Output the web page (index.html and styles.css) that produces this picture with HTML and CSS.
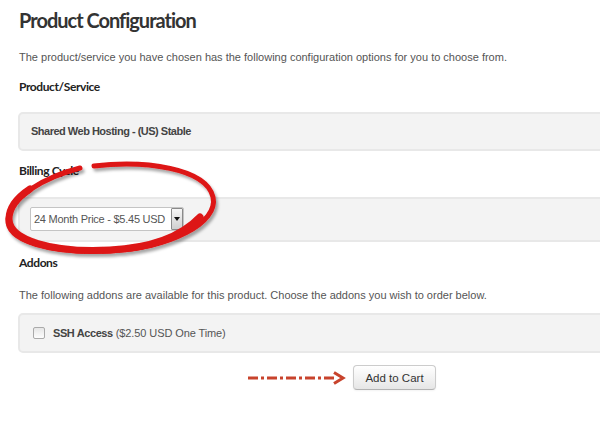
FILE: index.html
```html
<!DOCTYPE html>
<html>
<head>
<meta charset="utf-8">
<link rel="stylesheet" href="styles.css">
</head>
<body>
<div class="page">
  <h1 class="title">Product Configuration</h1>
  <p class="intro">The product/service you have chosen has the following configuration options for you to choose from.</p>

  <h3 class="label">Product/Service</h3>
  <div class="well well-product"><strong>Shared Web Hosting - (US) Stable</strong></div>

  <h3 class="label label-billing">Billing Cycle</h3>
  <div class="well well-select">
    <div class="select">
      <span class="select-text">24 Month Price - $5.45 USD</span>
      <span class="select-btn"><span class="caret"></span></span>
    </div>
  </div>

  <h3 class="label label-addons">Addons</h3>
  <p class="addons-intro">The following addons are available for this product. Choose the addons you wish to order below.</p>
  <div class="well well-addon">
    <span class="checkbox"></span>
    <span class="addon-text"><strong>SSH Access</strong> ($2.50 USD One Time)</span>
  </div>

  <div class="actions">
    <svg class="arrow" width="100" height="14" viewBox="0 0 100 14">
      <line x1="2" y1="7" x2="90" y2="7" stroke="#c8432c" stroke-width="3" stroke-dasharray="10 3 3 3"/>
      <path d="M88 1.5 L97 7 L88 12.5" fill="none" stroke="#c8432c" stroke-width="3" stroke-linejoin="miter"/>
    </svg>
    <button class="btn">Add to Cart</button>
  </div>

  <svg class="circle" width="240" height="115" viewBox="0 0 240 115">
    <defs>
      <filter id="sh" x="-10%" y="-10%" width="130%" height="140%">
        <feDropShadow dx="2" dy="3" stdDeviation="1.6" flood-color="#000" flood-opacity="0.35"/>
      </filter>
    </defs>
    <g filter="url(#sh)" fill="none" stroke="#dd1414" stroke-linecap="round">
      <path d="M94 11 C145 5, 206 13, 213 42 C219 68, 170 93, 110 96 C50 99, 6 86, 8 64 C10 42, 45 22, 80 13" stroke-width="5"/>
      <path d="M200 62 C180 83, 150 93, 110 95 C52 98, 9 85, 9 64 C9 52, 18 42, 30 34" stroke-width="7"/>
    </g>
  </svg>
</div>
</body>
</html>
```

FILE: styles.css
```css
html, body {
  margin: 0;
  padding: 0;
  background: #fff;
  overflow: hidden;
}
.page {
  position: relative;
  width: 760px;
  padding: 8px 0 40px 18px;
  font-family: "Liberation Sans", Arial, sans-serif;
  font-size: 11px;
  color: #555;
}
.title {
  margin: 0;
  padding-left: 1px;
  font-family: Lato, "Open Sans", sans-serif;
  font-weight: 700;
  font-size: 20px;
  line-height: 24px;
  letter-spacing: -1px;
  color: #333;
}
.intro {
  margin: 17px 0 0 1px;
  line-height: 16px;
}
.label {
  margin: 14px 0 0 1px;
  font-family: Lato, "Open Sans", sans-serif;
  font-weight: 700;
  font-size: 12px;
  line-height: 16px;
  letter-spacing: -0.4px;
  color: #222;
}
.label-billing { margin-top: 12px; }
.label-addons { margin-top: 13px; }
.well {
  background: #f3f3f3;
  border: 2px solid #e8e8e8;
  border-radius: 5px;
  line-height: 16px;
}
.well-product {
  margin-top: 17px;
  padding: 9px 11px 10px;
  color: #444;
}
.well-product strong {
  font-weight: 700;
  letter-spacing: -0.5px;
}
.well-select {
  margin-top: 18px;
  padding: 8px 10px 9px;
}
.select {
  display: flex;
  align-items: stretch;
  width: 154px;
  height: 24px;
  box-sizing: border-box;
  background: #fff;
  border: 1px solid #c4c4c4;
  border-radius: 2px;
}
.select-text {
  flex: 1;
  padding-left: 3px;
  font-size: 11px;
  line-height: 22px;
  letter-spacing: -0.25px;
  color: #555;
  white-space: nowrap;
}
.select-btn {
  flex: none;
  width: 10px;
  margin-left: 1px;
  border: 1px solid #8a8a8a;
  border-radius: 1px;
  background: linear-gradient(#f6f6f6, #cfcfcf);
  display: flex;
  align-items: center;
  justify-content: center;
}
.caret {
  width: 0;
  height: 0;
  border-left: 3px solid transparent;
  border-right: 3px solid transparent;
  border-top: 4px solid #111;
}
.addons-intro {
  margin: 16px 0 0 1px;
  line-height: 16px;
}
.well-addon {
  margin-top: 10px;
  padding: 10px 13px 10px;
  display: flex;
  align-items: center;
  gap: 8px;
  color: #555;
}
.well-addon strong {
  color: #444;
  font-weight: 700;
  letter-spacing: -0.4px;
}
.checkbox {
  width: 10px;
  height: 10px;
  border: 1px solid #aaa;
  border-radius: 2px;
  background: linear-gradient(#e6e6e6, #fdfdfd);
}
.addon-text {
  font-size: 11px;
  letter-spacing: -0.1px;
}
.actions {
  display: flex;
  align-items: center;
  margin-top: 12px;
  padding-left: 228px;
}
.arrow { display: block; }
.btn {
  margin-left: 7px;
  width: 83px;
  height: 25px;
  padding: 0;
  font-family: "Liberation Sans", Arial, sans-serif;
  font-size: 11.5px;
  color: #333;
  background: linear-gradient(#fff, #e6e6e6);
  border: 1px solid #ccc;
  border-bottom-color: #b3b3b3;
  border-radius: 4px;
  box-shadow: 0 1px 2px rgba(0,0,0,0.05);
}
.circle {
  position: absolute;
  left: 0;
  top: 155px;
}
```
